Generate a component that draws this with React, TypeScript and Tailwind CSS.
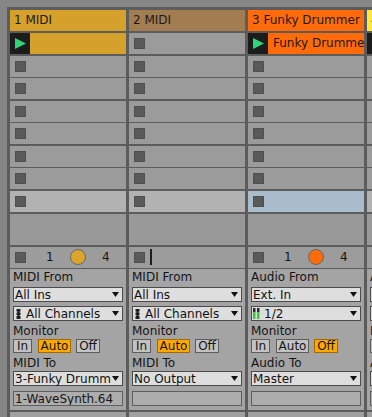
import React from 'react'

type IOConfig = {
    fromLabel: string
    from: string
    channel: string
    meter: 'midi' | 'audio'
    monitor: 'In' | 'Auto' | 'Off'
    toLabel: string
    to: string
    sub: string
}

type Track = {
    name: string
    headerBg: string
    clipBg?: string
    clipName?: string
    selectedBg: string
    status: 'clip' | 'armed'
    dotBg?: string
    io: IOConfig
}

const tracks: Track[] = [
    {
        name: '1 MIDI',
        headerBg: 'bg-[#d6a12b]',
        clipBg: 'bg-[#d6a12b]',
        clipName: '',
        selectedBg: 'bg-[#b2b2b2]',
        status: 'clip',
        dotBg: 'bg-[#dba42c]',
        io: {
            fromLabel: 'MIDI From',
            from: 'All Ins',
            channel: 'All Channels',
            meter: 'midi',
            monitor: 'Auto',
            toLabel: 'MIDI To',
            to: '3-Funky Drummer',
            sub: '1-WaveSynth.64',
        },
    },
    {
        name: '2 MIDI',
        headerBg: 'bg-[#a37d52]',
        selectedBg: 'bg-[#b2b2b2]',
        status: 'armed',
        io: {
            fromLabel: 'MIDI From',
            from: 'All Ins',
            channel: 'All Channels',
            meter: 'midi',
            monitor: 'Auto',
            toLabel: 'MIDI To',
            to: 'No Output',
            sub: '',
        },
    },
    {
        name: '3 Funky Drummer',
        headerBg: 'bg-[#ff6b0a]',
        clipBg: 'bg-[#ff6b0a]',
        clipName: 'Funky Drummer',
        selectedBg: 'bg-[#aabdcc]',
        status: 'clip',
        dotBg: 'bg-[#ff6b0a]',
        io: {
            fromLabel: 'Audio From',
            from: 'Ext. In',
            channel: '1/2',
            meter: 'audio',
            monitor: 'Off',
            toLabel: 'Audio To',
            to: 'Master',
            sub: '',
        },
    },
    {
        name: '4 Audio',
        headerBg: 'bg-[#ffe83c]',
        clipBg: 'bg-[#ffe83c]',
        clipName: 'Beat',
        selectedBg: 'bg-[#b2b2b2]',
        status: 'clip',
        dotBg: 'bg-[#ffe83c]',
        io: {
            fromLabel: 'Audio From',
            from: 'Ext. In',
            channel: '3/4',
            meter: 'audio',
            monitor: 'Auto',
            toLabel: 'Audio To',
            to: 'Master',
            sub: '',
        },
    },
]

function StopSquare({ className = '' }: { className?: string }) {
    return <div className={`h-[11px] w-[11px] shrink-0 border border-[#4f4f4f] bg-[#5a5a5a] ${className}`} />
}

function PlayBox() {
    return (
        <div className="flex h-full w-[20px] shrink-0 items-center justify-center bg-[#1c1c1c]">
            <svg width="11" height="11" viewBox="0 0 11 11">
                <polygon points="0,0 11,5.5 0,11" fill="#2fd47b" />
            </svg>
        </div>
    )
}

function ClipSlot({ track, index }: { track: Track; index: number }) {
    // first row holds the clip, last row is the selected scene
    if (index === 0 && track.clipBg) {
        return (
            <div className={`flex h-[21px] items-center overflow-hidden ${track.clipBg}`}>
                <PlayBox />
                <span className="whitespace-nowrap pl-[5px] text-[12px] leading-[15px] text-[#1a1a1a]">
                    {track.clipName}
                </span>
            </div>
        )
    }
    const bg = index === 7 ? track.selectedBg : 'bg-[#9b9b9b]'
    return (
        <div className={`flex h-[21px] items-center ${bg}`}>
            <StopSquare className="ml-[5px]" />
        </div>
    )
}

function StatusRow({ track }: { track: Track }) {
    return (
        <div className="flex h-[21px] items-center bg-[#9c9c9c] text-[12px] leading-[15px] text-[#161616]">
            <StopSquare className="ml-[5px]" />
            {track.status === 'armed' ? (
                <div className="ml-[5px] h-[16px] w-[1.5px] bg-[#1d1d1d]" />
            ) : (
                <>
                    <span className="ml-[20px] w-[8px]">1</span>
                    <span className={`ml-[16px] h-[16px] w-[16px] shrink-0 rounded-full border border-[#686868] ${track.dotBg}`} />
                    <span className="ml-[16px]">4</span>
                </>
            )}
        </div>
    )
}

function MeterIcon({ kind }: { kind: 'midi' | 'audio' }) {
    if (kind === 'midi') {
        return (
            <svg width="5" height="10" viewBox="0 0 5 10" className="ml-[2px] mr-[5px] mt-[2px] shrink-0">
                <rect x="0.5" y="0" width="4" height="10" fill="#1e1e1e" />
                <rect x="0" y="2.5" width="1.5" height="1" fill="#dedede" />
                <rect x="3.5" y="2.5" width="1.5" height="1" fill="#dedede" />
                <rect x="0" y="6" width="1.5" height="1" fill="#dedede" />
                <rect x="3.5" y="6" width="1.5" height="1" fill="#dedede" />
            </svg>
        )
    }
    return (
        <svg width="7" height="11" viewBox="0 0 7 11" className="ml-[1px] mr-[4px] mt-[1.5px] shrink-0">
            <rect x="0" y="0" width="2.5" height="4" fill="#2c2c2c" />
            <rect x="0" y="4" width="2.5" height="7" fill="#3fc63f" />
            <rect x="4" y="0" width="2.5" height="4" fill="#2c2c2c" />
            <rect x="4" y="4" width="2.5" height="7" fill="#3fc63f" />
        </svg>
    )
}

function Dropdown({ value, meter, className = '' }: { value: string; meter?: 'midi' | 'audio'; className?: string }) {
    return (
        <div className={`mx-[3px] flex h-[15px] items-start border border-[#4b4b4b] bg-[#dedede] text-[12px] leading-[14px] text-[#111] ${className}`}>
            {meter && <MeterIcon kind={meter} />}
            <span className={`min-w-0 flex-1 overflow-hidden whitespace-nowrap ${meter ? '' : 'pl-[1px]'}`}>{value}</span>
            <svg width="7" height="5" viewBox="0 0 7 5" className="ml-[1px] mr-[3px] mt-[4px] shrink-0">
                <polygon points="0,0 7,0 3.5,5" fill="#111" />
            </svg>
        </div>
    )
}

function MonitorButton({ label, active, className }: { label: string; active: boolean; className: string }) {
    return (
        <div
            className={`flex h-[14px] items-center justify-center border text-[12px] leading-[12px] text-[#151515] ${
                active ? 'border-[#a06c00] bg-[#ffa800]' : 'border-[#5c5c5c] bg-[#c2c2c2]'
            } ${className}`}
        >
            {label}
        </div>
    )
}

function IOSection({ io }: { io: IOConfig }) {
    return (
        <div className="flex h-[141px] flex-col bg-[#a4a4a4] pt-[1px] text-[12px] leading-[15px] text-[#141414]">
            <div className="whitespace-nowrap px-[3px]">{io.fromLabel}</div>
            <Dropdown className="mt-[1.5px]" value={io.from} />
            <Dropdown className="mt-[4px]" value={io.channel} meter={io.meter} />
            <div className="mt-[3px] px-[3px]">Monitor</div>
            <div className="ml-[3px] flex">
                <MonitorButton label="In" active={io.monitor === 'In'} className="w-[19px]" />
                <MonitorButton label="Auto" active={io.monitor === 'Auto'} className="ml-[6px] w-[33px]" />
                <MonitorButton label="Off" active={io.monitor === 'Off'} className="ml-[5px] w-[24px]" />
            </div>
            <div className="mt-[3px] whitespace-nowrap px-[3px]">{io.toLabel}</div>
            <Dropdown className="mt-[0.5px]" value={io.to} />
            <div className="mx-[3px] mt-[4.5px] h-[15px] overflow-hidden whitespace-nowrap border border-[#5e5e5e] bg-[#adadad] pl-[1px] leading-[14px] text-[#141414]">
                {io.sub}
            </div>
        </div>
    )
}

function TrackColumn({ track }: { track: Track }) {
    return (
        <div className="flex w-[116px] shrink-0 flex-col">
            <div className={`flex h-[21px] items-center overflow-hidden whitespace-nowrap pl-[4px] text-[12px] leading-[15px] text-[#1a1a1a] ${track.headerBg}`}>
                {track.name}
            </div>
            <div className="mt-[2px] flex flex-col gap-[1.5px]">
                {Array.from({ length: 8 }).map((_, i) => (
                    <ClipSlot key={i} track={track} index={i} />
                ))}
            </div>
            <div className="mt-[2px] h-[31.5px] bg-[#999999]" />
            <div className="mt-[1.5px]">
                <StatusRow track={track} />
            </div>
            <div className="mt-[1.5px]">
                <IOSection io={track.io} />
            </div>
            <div className="mt-[1.5px] flex-1 bg-[#a0a0a0]" />
        </div>
    )
}

export default function App() {
    return (
        <div className="h-[417px] w-[372px] overflow-hidden bg-[#868686] pl-[7px] pt-[7px] font-['DejaVu_Sans',sans-serif]">
            <div className="flex h-full gap-[3px] bg-[#5c5c5c] pl-[3px] pt-[3px]">
                {tracks.map((t) => (
                    <TrackColumn key={t.name} track={t} />
                ))}
            </div>
        </div>
    )
}
